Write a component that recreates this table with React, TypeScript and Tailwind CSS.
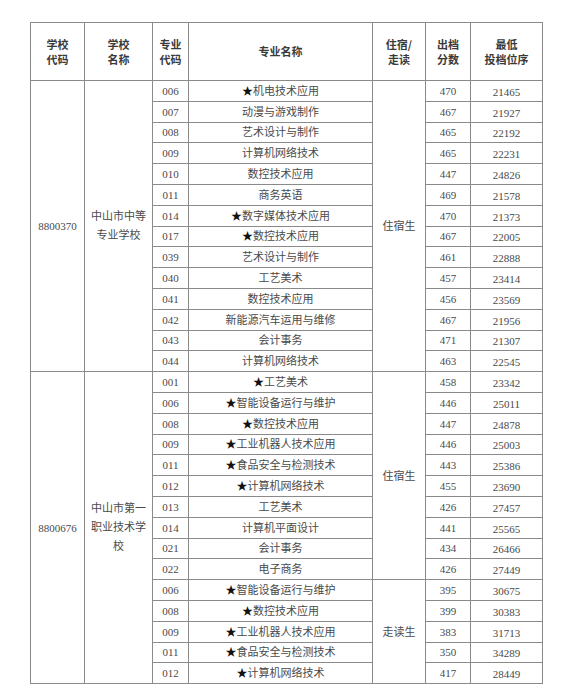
import React from "react";

type Row = { code: string; name: string; score: string; rank: string };

const g1: Row[] = [
  { code: "006", name: "★机电技术应用", score: "470", rank: "21465" },
  { code: "007", name: "动漫与游戏制作", score: "467", rank: "21927" },
  { code: "008", name: "艺术设计与制作", score: "465", rank: "22192" },
  { code: "009", name: "计算机网络技术", score: "465", rank: "22231" },
  { code: "010", name: "数控技术应用", score: "447", rank: "24826" },
  { code: "011", name: "商务英语", score: "469", rank: "21578" },
  { code: "014", name: "★数字媒体技术应用", score: "470", rank: "21373" },
  { code: "017", name: "★数控技术应用", score: "467", rank: "22005" },
  { code: "039", name: "艺术设计与制作", score: "461", rank: "22888" },
  { code: "040", name: "工艺美术", score: "457", rank: "23414" },
  { code: "041", name: "数控技术应用", score: "456", rank: "23569" },
  { code: "042", name: "新能源汽车运用与维修", score: "467", rank: "21956" },
  { code: "043", name: "会计事务", score: "471", rank: "21307" },
  { code: "044", name: "计算机网络技术", score: "463", rank: "22545" },
];

const g2a: Row[] = [
  { code: "001", name: "★工艺美术", score: "458", rank: "23342" },
  { code: "006", name: "★智能设备运行与维护", score: "446", rank: "25011" },
  { code: "008", name: "★数控技术应用", score: "447", rank: "24878" },
  { code: "009", name: "★工业机器人技术应用", score: "446", rank: "25003" },
  { code: "011", name: "★食品安全与检测技术", score: "443", rank: "25386" },
  { code: "012", name: "★计算机网络技术", score: "455", rank: "23690" },
  { code: "013", name: "工艺美术", score: "426", rank: "27457" },
  { code: "014", name: "计算机平面设计", score: "441", rank: "25565" },
  { code: "021", name: "会计事务", score: "434", rank: "26466" },
  { code: "022", name: "电子商务", score: "426", rank: "27449" },
];

const g2b: Row[] = [
  { code: "006", name: "★智能设备运行与维护", score: "395", rank: "30675" },
  { code: "008", name: "★数控技术应用", score: "399", rank: "30383" },
  { code: "009", name: "★工业机器人技术应用", score: "383", rank: "31713" },
  { code: "011", name: "★食品安全与检测技术", score: "350", rank: "34289" },
  { code: "012", name: "★计算机网络技术", score: "417", rank: "28449" },
];

const td = "border border-[#8a8a8a] text-center align-middle p-0";
const rowH = "h-[20.8px]";

function Name({ text }: { text: string }) {
  if (text.startsWith("★")) {
    return (
      <span>
        <span className="text-[#111] text-[11px]">★</span>
        {text.slice(1)}
      </span>
    );
  }
  return <span>{text}</span>;
}

function Cells({ r }: { r: Row }) {
  return (
    <>
      <td className={td}>{r.code}</td>
      <td className={td}>
        <Name text={r.name} />
      </td>
    </>
  );
}

function Tail({ r }: { r: Row }) {
  return (
    <>
      <td className={td}>{r.score}</td>
      <td className={`${td} pt-[2px]`}>{r.rank}</td>
    </>
  );
}

export default function App() {
  const th =
    "border border-[#8a8a8a] text-center align-middle font-bold text-[11px] leading-[15px] text-[#3a3a3a] p-0";
  return (
    <div className="w-[571px] h-[700px] bg-white pt-[22px] pl-[30px]">
      <table
        className="border-collapse table-fixed text-[11px] leading-[14px] text-[#4a4a4a]"
        style={{ fontFamily: '"Liberation Serif", "Noto Sans CJK SC", serif' }}
      >
        <colgroup>
          <col className="w-[54px]" />
          <col className="w-[68px]" />
          <col className="w-[36px]" />
          <col className="w-[184px]" />
          <col className="w-[53px]" />
          <col className="w-[45px]" />
          <col className="w-[72px]" />
        </colgroup>
        <thead style={{ fontFamily: '"Noto Sans CJK SC", sans-serif' }}>
          <tr className="h-[58px]">
            <th className={th}>学校<br />代码</th>
            <th className={th}>学校<br />名称</th>
            <th className={th}>专业<br />代码</th>
            <th className={th}>专业名称</th>
            <th className={th}>住宿/<br />走读</th>
            <th className={th}>出档<br />分数</th>
            <th className={th}>最低<br />投档位序</th>
          </tr>
        </thead>
        <tbody>
          {g1.map((r, i) => (
            <tr key={"a" + i} className={rowH}>
              {i === 0 && (
                <>
                  <td className={td} rowSpan={g1.length}>8800370</td>
                  <td className={`${td} px-[4px] leading-[19px]`} rowSpan={g1.length}>
                    中山市中等专业学校
                  </td>
                </>
              )}
              <Cells r={r} />
              {i === 0 && (
                <td className={td} rowSpan={g1.length}>住宿生</td>
              )}
              <Tail r={r} />
            </tr>
          ))}
          {g2a.map((r, i) => (
            <tr key={"b" + i} className={rowH}>
              {i === 0 && (
                <>
                  <td className={td} rowSpan={g2a.length + g2b.length}>8800676</td>
                  <td
                    className={`${td} px-[4px] leading-[19px]`}
                    rowSpan={g2a.length + g2b.length}
                  >
                    中山市第一职业技术学校
                  </td>
                </>
              )}
              <Cells r={r} />
              {i === 0 && (
                <td className={td} rowSpan={g2a.length}>住宿生</td>
              )}
              <Tail r={r} />
            </tr>
          ))}
          {g2b.map((r, i) => (
            <tr key={"c" + i} className={rowH}>
              <Cells r={r} />
              {i === 0 && (
                <td className={td} rowSpan={g2b.length}>走读生</td>
              )}
              <Tail r={r} />
            </tr>
          ))}
        </tbody>
      </table>
    </div>
  );
}
